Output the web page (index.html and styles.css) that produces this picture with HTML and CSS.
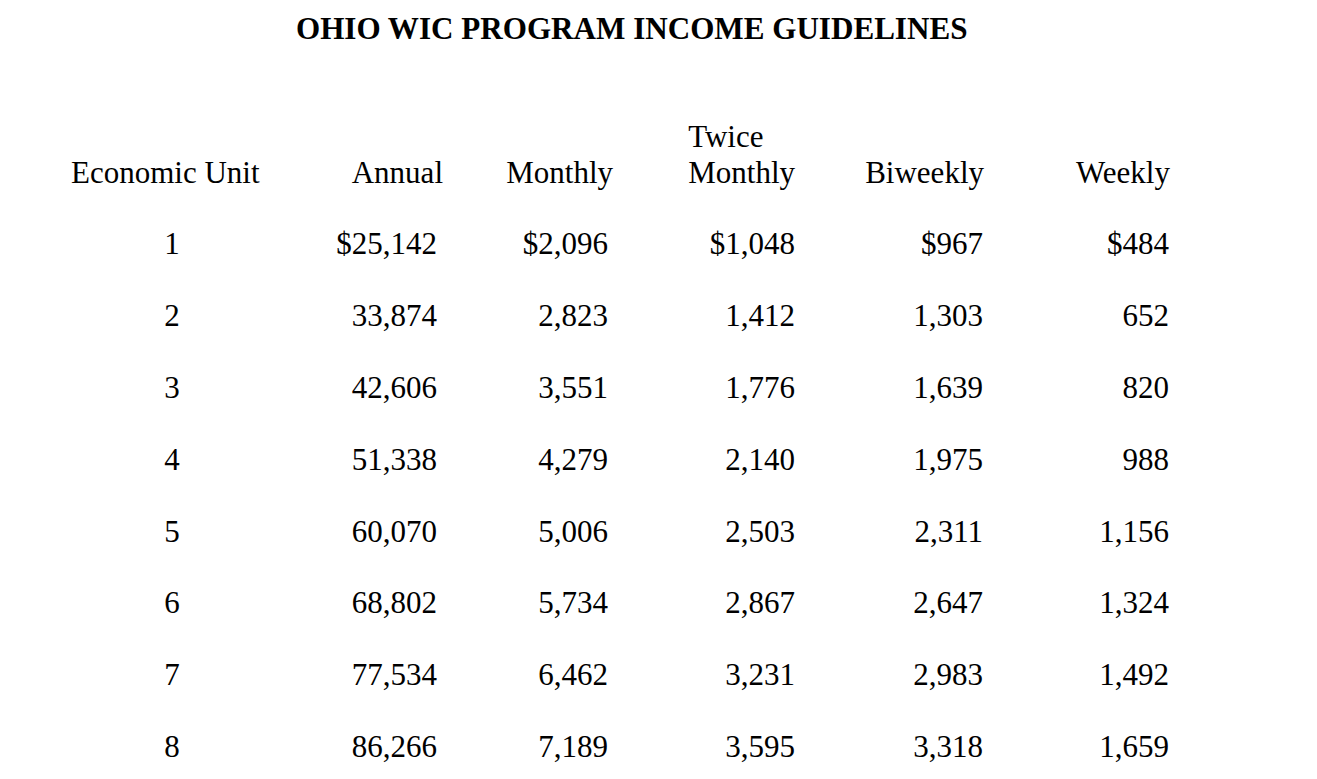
FILE: index.html
```html
<!DOCTYPE html>
<html lang="en">
<head>
<meta charset="utf-8">
<title>Ohio WIC Program Income Guidelines</title>
<link rel="stylesheet" href="styles.css">
</head>
<body>
<div class="page">
  <h1 class="title">OHIO WIC PROGRAM INCOME GUIDELINES</h1>
  <div class="table">
    <div class="th th-unit">Economic Unit</div>
    <div class="th th-annual">Annual</div>
    <div class="th th-monthly">Monthly</div>
    <div class="th th-twice">Twice<br>Monthly</div>
    <div class="th th-biweekly">Biweekly</div>
    <div class="th th-weekly">Weekly</div>

    <div class="td unit">1</div><div class="td annual">$25,142</div><div class="td monthly">$2,096</div><div class="td twice">$1,048</div><div class="td biweekly">$967</div><div class="td weekly">$484</div>
    <div class="td unit">2</div><div class="td annual">33,874</div><div class="td monthly">2,823</div><div class="td twice">1,412</div><div class="td biweekly">1,303</div><div class="td weekly">652</div>
    <div class="td unit">3</div><div class="td annual">42,606</div><div class="td monthly">3,551</div><div class="td twice">1,776</div><div class="td biweekly">1,639</div><div class="td weekly">820</div>
    <div class="td unit">4</div><div class="td annual">51,338</div><div class="td monthly">4,279</div><div class="td twice">2,140</div><div class="td biweekly">1,975</div><div class="td weekly">988</div>
    <div class="td unit">5</div><div class="td annual">60,070</div><div class="td monthly">5,006</div><div class="td twice">2,503</div><div class="td biweekly">2,311</div><div class="td weekly">1,156</div>
    <div class="td unit">6</div><div class="td annual">68,802</div><div class="td monthly">5,734</div><div class="td twice">2,867</div><div class="td biweekly">2,647</div><div class="td weekly">1,324</div>
    <div class="td unit">7</div><div class="td annual">77,534</div><div class="td monthly">6,462</div><div class="td twice">3,231</div><div class="td biweekly">2,983</div><div class="td weekly">1,492</div>
    <div class="td unit">8</div><div class="td annual">86,266</div><div class="td monthly">7,189</div><div class="td twice">3,595</div><div class="td biweekly">3,318</div><div class="td weekly">1,659</div>
  </div>
</div>
</body>
</html>
```

FILE: styles.css
```css
html, body {
  margin: 0;
  padding: 0;
  background: #ffffff;
}

body {
  font-family: "Liberation Serif", "Times New Roman", serif;
  font-size: 31px;
  line-height: 35.9px;
  color: #000000;
}

.page {
  padding-top: 11px;
}

.title {
  margin: 0 0 71.8px 296px;
  font-size: 31.1px;
  line-height: 35.9px;
  font-weight: bold;
}

.table {
  display: grid;
  grid-template-columns: 200px 171px 170px 182px 189px 186px;
  row-gap: 35.9px;
  padding-left: 72px;
}

.th {
  align-self: end;
  text-align: right;
  white-space: nowrap;
}

.th-unit {
  text-align: left;
  margin-left: -1px;
}

.th-twice {
  justify-self: end;
  text-align: left;
}

.td {
  text-align: right;
  white-space: nowrap;
}

.td.unit {
  text-align: center;
}

.td.annual {
  padding-right: 6px;
}

.td.monthly {
  padding-right: 5px;
}

.td.biweekly,
.td.weekly {
  padding-right: 1px;
}
```
